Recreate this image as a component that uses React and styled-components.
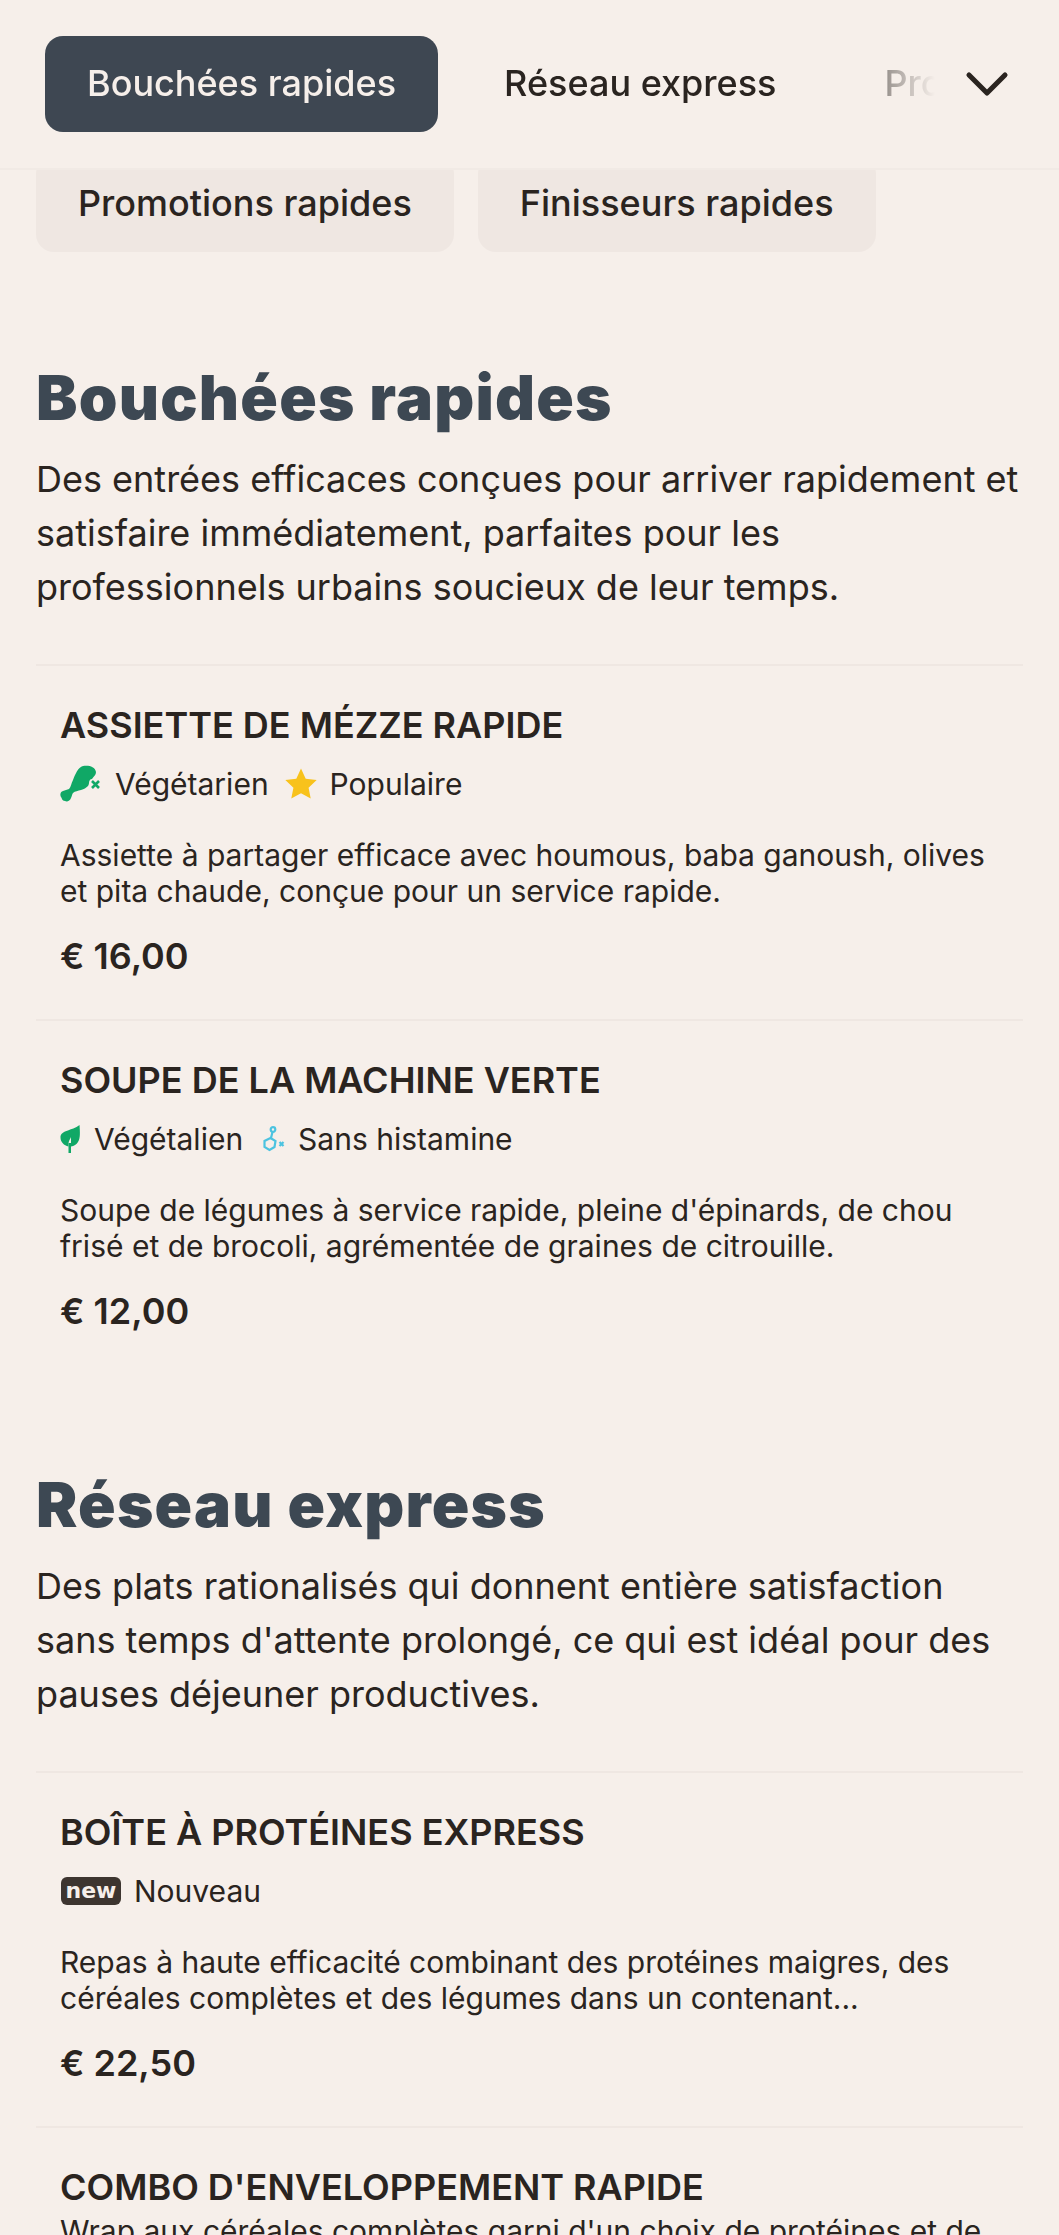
import React from 'react';
import styled, { createGlobalStyle } from 'styled-components';
import { ChevronDown } from 'lucide-react';

const Global = createGlobalStyle`
  html, body { margin: 0; padding: 0; background: #f6efea; overflow: hidden; }
  * { box-sizing: border-box; }
  body { font-family: Inter, "Liberation Sans", sans-serif; color: #2a2420; }
`;

const Page = styled.div`
  width: 1059px;
  height: 2235px;
  overflow: hidden;
`;
const Nav = styled.div`
  height: 170px;
  border-bottom: 2px solid #f1eae5;
  display: flex;
  align-items: center;
  padding-left: 45px;
`;
const NavTrack = styled.div`
  display: flex;
  width: 890px;
  overflow: hidden;
  gap: 24px;
  -webkit-mask-image: linear-gradient(to right, #000 91%, rgba(0,0,0,.4) 95%, transparent 100%);
  mask-image: linear-gradient(to right, #000 91%, rgba(0,0,0,.4) 95%, transparent 100%);
`;
const NavTab = styled.div`
  flex: none;
  height: 96px;
  padding: 0 42px 2px;
  border-radius: 18px;
  display: flex;
  align-items: center;
  font-size: 36px;
  font-weight: 500;
  white-space: nowrap;
  background: ${p => (p.$active ? '#3e4752' : 'transparent')};
  color: ${p => (p.$active ? '#f6efea' : '#2a2420')};
`;
const Chevron = styled.div`
  margin-left: 16px;
  display: flex;
  color: #2a2420;
`;
const ChipRow = styled.div`
  height: 82px;
  overflow: hidden;
  display: flex;
  align-items: flex-end;
  gap: 24px;
  padding-left: 36px;
`;
const Chip = styled.div`
  flex: none;
  height: 96px;
  padding: 0 42px 2px;
  border-radius: 18px;
  background: #efe7e2;
  display: flex;
  align-items: center;
  font-size: 36px;
  font-weight: 500;
`;
const Section = styled.section`
  padding: 0 36px;
  margin-top: ${p => p.$top}px;
`;
const Heading = styled.h2`
  margin: 0;
  font-size: 62px;
  line-height: 76px;
  font-weight: 900;
  letter-spacing: 1.25px;
  color: #3d4853;
`;
const Lead = styled.p`
  margin: 16px 0 0;
  font-size: 36px;
  line-height: 54px;
`;
const Menu = styled.div`
  margin-top: 50px;
`;
const Item = styled.article`
  border-top: 2px solid #efe7e2;
  padding: 36px 24px 40px;
`;
const Title = styled.h3`
  margin: 0;
  font-size: 36px;
  line-height: 46px;
  font-weight: 600;
`;
const Tags = styled.div`
  display: flex;
  align-items: center;
  gap: 16px;
  margin-top: 16px;
  height: 40px;
`;
const Tag = styled.span`
  display: flex;
  align-items: center;
  gap: 13px;
  font-size: 30px;
`;
const NewBadge = styled.span`
  background: #3d3530;
  color: #f6efea;
  border-radius: 6px;
  margin-left: 1px;
  font-family: "DejaVu Sans", sans-serif;
  font-size: 22px;
  font-weight: 700;
  line-height: 28px;
  width: 60px;
  text-align: center;
`;
const Desc = styled.p`
  margin: ${p => (p.$tight ? 3 : 33)}px 0 0;
  font-size: 30px;
  line-height: 36px;
`;
const Price = styled.div`
  margin-top: 24px;
  font-size: 36px;
  line-height: 46px;
  font-weight: 600;
`;

const Drumstick = () => (
  <svg width="42" height="38" viewBox="0 0 42 38">
    <path d="M23 1c5-1 12 0 13 6 0 3-2 4-4 7-2 0-3 2-3 4 0 1-1 3-1 3-2 2-4 3-7 4-3 1-6 1-8 3-1 1-1 3-2 5-1 3-4 4-6 3-3 0-3-3-4-4C0 30 0 27 3 26c2-1 4-1 6-2 2-2 2-5 4-9 2-5 5-13 10-14z" fill="#10a866" />
    <path d="M32 16l7 7M39 16l-7 7" stroke="#10a866" strokeWidth="2.6" fill="none" />
  </svg>
);
const Leaf = () => (
  <svg width="21" height="28" viewBox="0 0 21 28">
    <path d="M19.500 0c.5 7 1 13-1.500 17-1.500 2.500-4 4-7 4.500V12c-.5 1.500-2 3-2.500 6v3.500C4 20.500.5 17 .5 12.500.5 5 12 6 19.500 0z" fill="#10a866" />
    <path d="M8.500 18H11v10H8.500z" fill="#10a866" />
  </svg>
);
const Molecule = () => (
  <svg width="26" height="26" viewBox="0 0 26 26" fill="none" stroke="#4cc3e0" strokeWidth="2.200">
    <circle cx="14" cy="3.500" r="2.300" />
    <path d="M13.500 6l-1.500 6" />
    <path d="M11.500 12l5 3-1 6-5 3-5-3 0-6z" />
    <path d="M20.500 16l4 4M24.500 16l-4 4" />
  </svg>
);
const Star = () => (
  <svg width="32" height="32" viewBox="0 0 30 30">
    <path d="M15 .5l4.400 9.600 10.300 1.200-7.600 7.100 2 10.300L15 23.700 5.900 28.700l2-10.300-7.600-7.100 10.300-1.200z" fill="#f8c21c" />
  </svg>
);

const Dish = ({ name, tags, text, price }) => (
  <Item>
    <Title>{name}</Title>
    {tags && <Tags>{tags}</Tags>}
    <Desc $tight={!tags}>{text}</Desc>
    {price && <Price>{price}</Price>}
  </Item>
);

export default function App() {
  return (
    <Page>
      <Global />
      <Nav>
        <NavTrack>
          <NavTab $active>Bouchées rapides</NavTab>
          <NavTab>Réseau express</NavTab>
          <NavTab>Promotions rapides</NavTab>
        </NavTrack>
        <Chevron><ChevronDown size={72} strokeWidth={1.7} /></Chevron>
      </Nav>
      <ChipRow>
        <Chip>Promotions rapides</Chip>
        <Chip>Finisseurs rapides</Chip>
      </ChipRow>

      <Section $top={108}>
        <Heading>Bouchées rapides</Heading>
        <Lead>Des entrées efficaces conçues pour arriver rapidement et satisfaire immédiatement, parfaites pour les professionnels urbains soucieux de leur temps.</Lead>
        <Menu>
          <Dish
            name="ASSIETTE DE MÉZZE RAPIDE"
            tags={<>
              <Tag><Drumstick />Végétarien</Tag>
              <Tag><Star />Populaire</Tag>
            </>}
            text="Assiette à partager efficace avec houmous, baba ganoush, olives et pita chaude, conçue pour un service rapide."
            price="€ 16,00"
          />
          <Dish
            name="SOUPE DE LA MACHINE VERTE"
            tags={<>
              <Tag><Leaf />Végétalien</Tag>
              <Tag><Molecule />Sans histamine</Tag>
            </>}
            text="Soupe de légumes à service rapide, pleine d'épinards, de chou frisé et de brocoli, agrémentée de graines de citrouille."
            price="€ 12,00"
          />
        </Menu>
      </Section>

      <Section $top={93}>
        <Heading>Réseau express</Heading>
        <Lead>Des plats rationalisés qui donnent entière satisfaction sans temps d'attente prolongé, ce qui est idéal pour des pauses déjeuner productives.</Lead>
        <Menu>
          <Dish
            name="BOÎTE À PROTÉINES EXPRESS"
            tags={<Tag><NewBadge>new</NewBadge>Nouveau</Tag>}
            text="Repas à haute efficacité combinant des protéines maigres, des céréales complètes et des légumes dans un contenant..."
            price="€ 22,50"
          />
          <Dish
            name="COMBO D'ENVELOPPEMENT RAPIDE"
            text="Wrap aux céréales complètes garni d'un choix de protéines et de légumes croquants, prêt en quelques minutes."
          />
        </Menu>
      </Section>
    </Page>
  );
}
